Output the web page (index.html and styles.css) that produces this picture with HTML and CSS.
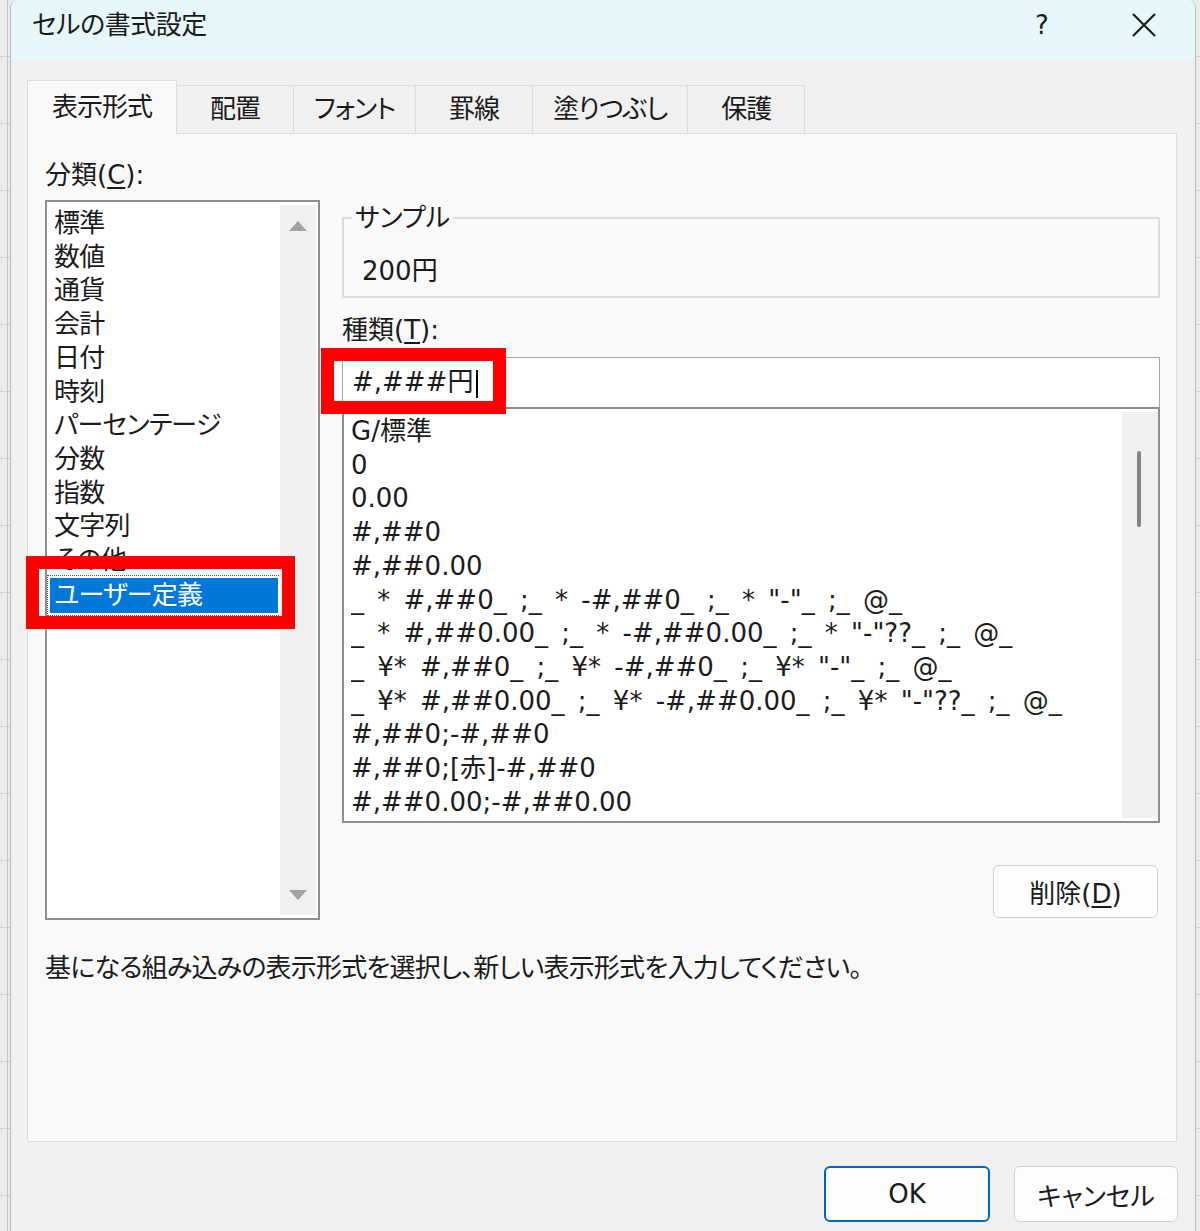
FILE: index.html
```html
<!DOCTYPE html>
<html lang="ja">

<head>
  <meta charset="UTF-8">
  <meta name="viewport" content="width=device-width, initial-scale=1.0">
  <title>セルの書式設定</title>
  <link rel="stylesheet" href="styles.css">
</head>

<body>
  <div class="dialog">
    <div class="titlebar">
      <h1 class="title">セルの書式設定</h1>
      <span class="help">?</span>
      <button class="close" aria-label="閉じる">
        <svg width="26" height="26" viewBox="0 0 26 26">
          <path d="M2 2 L24 24 M24 2 L2 24" stroke="#1b1b1b" stroke-width="2.2" fill="none" />
        </svg>
      </button>
    </div>

    <div class="content">
      <ul class="tabs">
        <li class="tab active">表示形式</li>
        <li class="tab">配置</li>
        <li class="tab">フォント</li>
        <li class="tab">罫線</li>
        <li class="tab">塗りつぶし</li>
        <li class="tab">保護</li>
      </ul>

      <div class="panel">
        <div class="columns">
          <div class="category">
            <p class="label">分類(<u>C</u>):</p>
            <div class="listbox">
              <ul class="items">
                <li>標準</li>
                <li>数値</li>
                <li>通貨</li>
                <li>会計</li>
                <li>日付</li>
                <li>時刻</li>
                <li>パーセンテージ</li>
                <li>分数</li>
                <li>指数</li>
                <li>文字列</li>
                <li>その他</li>
                <li class="selected">ユーザー定義<span class="mark"></span></li>
              </ul>
              <div class="scrollbar">
                <span class="arrow up"></span>
                <span class="arrow down"></span>
              </div>
            </div>
          </div>

          <div class="format">
            <fieldset class="sample">
              <legend>サンプル</legend>
              <p>200円</p>
            </fieldset>

            <p class="label type-label">種類(<u>T</u>):</p>
            <div class="type-field">#,###円<span class="caret"></span><span class="mark"></span></div>

            <div class="listbox formats">
              <ul class="items">
                <li>G/標準</li>
                <li>0</li>
                <li>0.00</li>
                <li>#,##0</li>
                <li>#,##0.00</li>
                <li>_ * #,##0_ ;_ * -#,##0_ ;_ * "-"_ ;_ @_</li>
                <li>_ * #,##0.00_ ;_ * -#,##0.00_ ;_ * "-"??_ ;_ @_</li>
                <li>_ ¥* #,##0_ ;_ ¥* -#,##0_ ;_ ¥* "-"_ ;_ @_</li>
                <li>_ ¥* #,##0.00_ ;_ ¥* -#,##0.00_ ;_ ¥* "-"??_ ;_ @_</li>
                <li>#,##0;-#,##0</li>
                <li>#,##0;[赤]-#,##0</li>
                <li>#,##0.00;-#,##0.00</li>
              </ul>
              <div class="scrollbar">
                <span class="thumb"></span>
              </div>
            </div>

            <div class="actions">
              <button class="btn delete">削除(<u>D</u>)</button>
            </div>
          </div>
        </div>

        <p class="hint">基になる組み込みの表示形式を選択し、新しい表示形式を入力してください。</p>
      </div>

      <div class="footer">
        <button class="btn primary">OK</button>
        <button class="btn">キャンセル</button>
      </div>
    </div>
  </div>
</body>

</html>
```

FILE: styles.css
```css
* {
  box-sizing: border-box;
}

:root {
  --font-size: 26px;
  --row: 33.7px;
  --text: #1b1b1b;
  --surface: #f0f0f0;
  --panel: #f9f9f9;
  --line: #dcdcdc;
  --list-border: #8e8e8e;
  --accent: #0078d7;
  --mark: #ff0000;
}

html,
body {
  height: 100%;
}

body {
  margin: 0;
  overflow: hidden;
  font-family: "DejaVu Sans", "Noto Sans CJK JP", sans-serif;
  font-size: var(--font-size);
  font-feature-settings: "palt";
  color: var(--text);
  background-color: #ececec;
  background-image:
    linear-gradient(to right, transparent 7px, #c6c6c6 7px, #c6c6c6 8px, transparent 8px),
    repeating-linear-gradient(to bottom, transparent 0 56px, #d0d0d0 56px 57px, transparent 57px 67px);
}

button {
  font: inherit;
  color: inherit;
}

/* dialog frame */
.dialog {
  margin-left: 10px;
  width: 1186px;
  height: 1240px;
  background: var(--surface);
  border-left: 1px solid #b9b9b9;
  border-right: 1px solid #b9b9b9;
  border-radius: 8px 8px 0 0;
  overflow: hidden;
}

.titlebar {
  display: flex;
  align-items: center;
  height: 60px;
  padding: 0 0 10px 21px;
  background: #e7f6f8;
}

.title {
  flex: 1;
  margin: 0;
  font-size: var(--font-size);
  font-weight: normal;
  line-height: 34px;
  letter-spacing: -0.5px;
}

.help {
  width: 40px;
  text-align: center;
  line-height: 34px;
}

.close {
  display: flex;
  justify-content: center;
  align-items: center;
  width: 46px;
  height: 46px;
  margin: 0 28px 0 59px;
  padding: 0;
  border: none;
  background: none;
}

.content {
  padding: 20px 18px 0 16px;
}

/* tabs */
.tabs {
  display: flex;
  align-items: flex-start;
  height: 54px;
  margin: 0 0 -1px;
  padding: 0;
  list-style: none;
  position: relative;
  z-index: 1;
  letter-spacing: -1px;
}

.tab {
  height: 48px;
  min-width: 118px;
  margin-top: 5px;
  margin-left: -1px;
  padding: 0 20px;
  text-align: center;
  line-height: 46px;
  background: var(--surface);
  border: 1px solid var(--line);
  border-bottom: none;
}

.tab.active {
  height: 54px;
  min-width: 150px;
  margin: 0;
  line-height: 52px;
  background: var(--panel);
}

.panel {
  height: 1009px;
  padding: 24px 16px 0 17px;
  background: var(--panel);
  border: 1px solid var(--line);
}

.columns {
  display: grid;
  grid-template-columns: 275px 1fr;
  column-gap: 22px;
}

.label {
  margin: 0;
  line-height: 34px;
}

.label u,
.btn u {
  text-underline-offset: 3px;
}

/* list boxes */
.listbox {
  display: flex;
  background: #fff;
  border: 2px solid var(--list-border);
}

.items {
  margin: 0;
  padding: 0;
  list-style: none;
  line-height: var(--row);
}

.scrollbar {
  position: relative;
  width: 36px;
  background: var(--surface);
}

.category .listbox {
  height: 720px;
  margin-top: 8px;
  padding: 2px 2px 2px 3px;
}

.category .items {
  width: 228px;
  padding-top: 3px;
  letter-spacing: -0.8px;
}

.category .items li {
  padding-left: 4px;
}

.category .items .selected {
  position: relative;
  height: 35px;
  line-height: 35px;
  color: #fff;
  background: var(--accent);
  outline: 1px dotted #555;
  outline-offset: 2px;
}

.category .scrollbar {
  display: flex;
  flex-direction: column;
  justify-content: space-between;
  align-items: center;
  margin: 1px 0 1px 2px;
  padding: 16px 0 15px;
}

.arrow {
  width: 0;
  height: 0;
  border-left: 9px solid transparent;
  border-right: 9px solid transparent;
}

.arrow.up {
  border-bottom: 10px solid #a2a2a2;
}

.arrow.down {
  border-top: 10px solid #a2a2a2;
}

/* red highlight boxes */
.mark {
  position: absolute;
  z-index: 2;
  border: 13px solid var(--mark);
  pointer-events: none;
}

.selected .mark {
  left: -24px;
  top: -22px;
  width: 269px;
  height: 73px;
}

.type-field .mark {
  left: -22px;
  top: -10px;
  width: 185px;
  height: 66px;
}

/* format column */
.sample {
  margin: 43px 0 0;
  padding: 0;
  min-width: 0;
  border: 2px solid var(--line);
}

.sample legend {
  margin-left: 8px;
  padding: 0 3px;
  line-height: 34px;
}

.sample p {
  margin: 0;
  padding: 19px 0 8px 18px;
  line-height: 34px;
}

.type-label {
  margin-top: 15px;
}

.type-field {
  position: relative;
  height: 50px;
  margin-top: 10px;
  padding-left: 9px;
  line-height: 49px;
  background: #fff;
  border: 1px solid #a6a6a6;
  border-bottom: none;
}

.caret {
  display: inline-block;
  width: 2px;
  height: 28px;
  margin-left: 3px;
  vertical-align: middle;
  background: #000;
}

.formats {
  height: 416px;
  padding: 3px 0 3px 7px;
}

.formats .items {
  flex: 1;
  padding-top: 3px;
  overflow: hidden;
  word-spacing: 5px;
}

.formats .items li {
  white-space: pre;
}

.formats .scrollbar {
  flex-shrink: 0;
}

.thumb {
  position: absolute;
  left: 15px;
  top: 39px;
  width: 4px;
  height: 76px;
  border-radius: 2px;
  background: #858585;
}

.actions {
  display: flex;
  justify-content: flex-end;
  margin-top: 42px;
}

.btn {
  height: 56px;
  padding: 0;
  background: #fdfdfd;
  border: 1px solid #d0d0d0;
  border-radius: 6px;
}

.btn.delete {
  width: 165px;
  height: 53px;
  margin-right: 2px;
}

.hint {
  margin: 31px 0 0;
  line-height: 34px;
  letter-spacing: -0.8px;
}

.footer {
  display: flex;
  justify-content: flex-end;
  gap: 24px;
  margin: 24px -1px 0 0;
}

.footer .btn {
  width: 164px;
}

.btn.primary {
  width: 166px;
  border: 2px solid #0067c0;
}
```
